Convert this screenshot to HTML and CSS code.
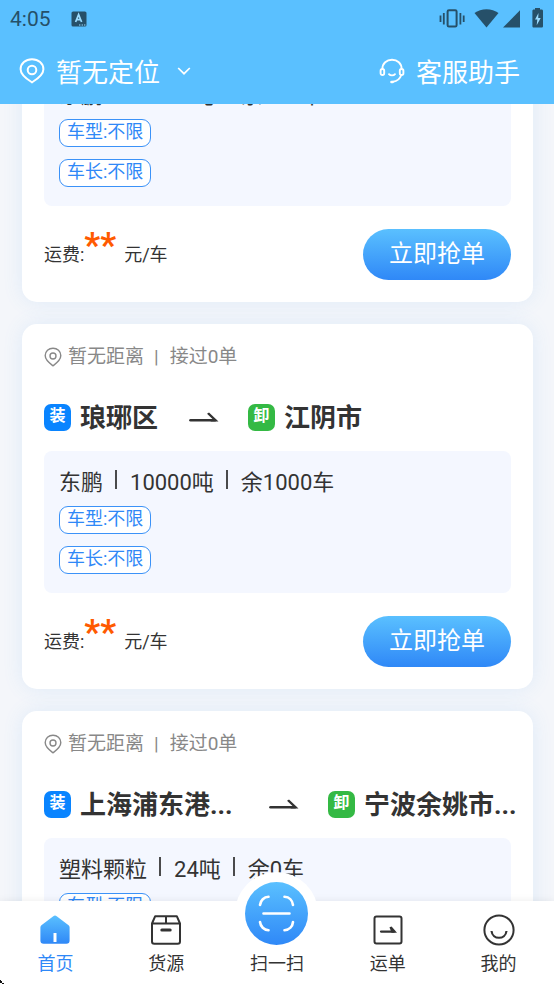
FILE: index.html
```html
<!DOCTYPE html>
<html lang="zh-CN">
<head>
<meta charset="utf-8">
<meta name="viewport" content="width=device-width, initial-scale=1">
<title>首页</title>
<link rel="stylesheet" href="styles.css">
</head>
<body>
<svg class="defs" width="0" height="0" aria-hidden="true">
  <defs>
    <linearGradient id="blue" x1="0" y1="0" x2="0" y2="1">
      <stop offset="0" stop-color="#5ac0ff"/>
      <stop offset="1" stop-color="#2f88f7"/>
    </linearGradient>
    <symbol id="pin" viewBox="0 0 26 26">
      <path d="M13 24.3C10.8 22.9 1.6 17.6 1.6 11.2C1.6 5.2 6.6 1.2 13 1.2S24.4 5.2 24.4 11.2C24.4 17.6 15.2 22.9 13 24.3Z"/>
      <circle cx="13" cy="12" r="4.3"/>
    </symbol>
    <symbol id="pin-tall" viewBox="0 0 18 20">
      <path d="M9 18.800C7.300 17.500 1.200 13.600 1.200 8.600C1.200 4.200 4.700 1.200 9 1.200S16.800 4.200 16.800 8.600C16.800 13.600 10.700 17.500 9 18.800Z"/>
      <circle cx="9" cy="9" r="3"/>
    </symbol>
    <symbol id="arrow" viewBox="0 0 30 12">
      <path d="M1.500 9.200H26" fill="none" stroke="#333" stroke-width="2.600" stroke-linecap="round"/>
      <path d="M18 2.800L20 1.400L29.500 10.500H21.500L23.500 8Z" fill="#333"/>
    </symbol>
  </defs>
</svg>
<div class="app">
  <header class="top">
    <div class="status">
      <span class="status__time">4:05</span>
      <svg class="status__app" width="16" height="16" viewBox="0 0 16 16"><rect x=".5" y=".5" width="15" height="15" rx="1.6" fill="#265069"/><path d="M4.600 11L7.600 3.600L10.600 11M5.600 8.700H9.600" fill="none" stroke="#9bdcff" stroke-width="1.700"/><path d="M8 14H9.400M10.600 14H12M13 14H14.400" stroke="#9bdcff" stroke-width="1.200"/></svg>
      <svg class="status__right" width="106" height="22" viewBox="0 0 106 22" fill="#265069">
        <rect x="9.600" y="2.200" width="9" height="16.400" rx="1.400" fill="none" stroke="#265069" stroke-width="2"/>
        <path d="M2.500 7.500V14M5.800 5V16.500M22.400 5V16.500M25.700 7.500V14" stroke="#265069" stroke-width="1.800" fill="none"/>
        <path d="M36.500 5C43 -.1 54 -.1 60.500 5L48.500 19.500Z"/>
        <path d="M82 2.300V19.500H65Z"/>
        <path d="M97 0H102V1.600H103.600C104.400 1.600 105 2.200 105 3V18.200C105 19 104.400 19.600 103.600 19.600H95.800C95 19.600 94.400 19 94.400 18.200V3C94.400 2.200 95 1.600 95.800 1.600H97Z"/>
        <path d="M100.500 5L97 11.500H99.300L98.700 17.300L102.700 10H100.200Z" fill="#9bdcff"/>
      </svg>
    </div>
    <div class="bar">
      <button class="bar__btn" type="button">
        <svg class="pin-lg" width="26" height="26"><use href="#pin"/></svg>
        <span class="bar__label">暂无定位</span>
        <svg class="chev" width="14" height="9" viewBox="0 0 14 9"><path d="M1.200 1L7 6.700L12.800 1" fill="none" stroke="#fff" stroke-width="1.700"/></svg>
      </button>
      <button class="bar__btn" type="button">
        <svg width="26" height="26" viewBox="0 0 26 26" fill="none" stroke="#fff" stroke-width="1.900" stroke-linecap="round"><path d="M3.400 10.800C3.400 5.300 7.600 1.800 13 1.800S22.600 5.300 22.600 10.800"/><rect x="1.600" y="11" width="3.600" height="6" rx="1.800"/><rect x="20.800" y="11" width="3.600" height="6" rx="1.800"/><path d="M22.300 17C21 20.800 18 23.200 14 23.800"/><path d="M12.500 24H13.500" stroke-width="2.600"/><path d="M10 16.200C11.400 17.800 14.600 17.800 16 16.200"/></svg>
        <span class="bar__label">客服助手</span>
      </button>
    </div>
  </header>

  <main class="viewport">
    <div class="feed">
      <article class="card">
        <section class="cargo">
          <p class="cargo__line"><span>东鹏</span><i class="rule"></i><span>10000吨</span><i class="rule"></i><span>余999车</span></p>
          <span class="chip">车型:不限</span>
          <span class="chip">车长:不限</span>
        </section>
        <footer class="deal"><p class="fee">运费:<b>**</b><span class="fee__unit">元/车</span></p><button class="grab" type="button">立即抢单</button></footer>
      </article>

      <article class="card">
        <div class="meta"><svg class="pin-sm" width="18" height="20"><use href="#pin-tall"/></svg><span>暂无距离</span><span class="meta__sep">|</span><span>接过0单</span></div>
        <div class="route"><span class="mark mark--load">装</span><strong class="route__name">琅琊区</strong><svg class="route__arrow" width="30" height="12"><use href="#arrow"/></svg><span class="mark mark--drop">卸</span><strong class="route__name">江阴市</strong></div>
        <section class="cargo">
          <p class="cargo__line"><span>东鹏</span><i class="rule"></i><span>10000吨</span><i class="rule"></i><span>余1000车</span></p>
          <span class="chip">车型:不限</span>
          <span class="chip">车长:不限</span>
        </section>
        <footer class="deal"><p class="fee">运费:<b>**</b><span class="fee__unit">元/车</span></p><button class="grab" type="button">立即抢单</button></footer>
      </article>

      <article class="card">
        <div class="meta"><svg class="pin-sm" width="18" height="20"><use href="#pin-tall"/></svg><span>暂无距离</span><span class="meta__sep">|</span><span>接过0单</span></div>
        <div class="route"><span class="mark mark--load">装</span><strong class="route__name route__name--cut">上海浦东港...</strong><svg class="route__arrow" width="30" height="12"><use href="#arrow"/></svg><span class="mark mark--drop">卸</span><strong class="route__name">宁波余姚市...</strong></div>
        <section class="cargo">
          <p class="cargo__line"><span>塑料颗粒</span><i class="rule"></i><span>24吨</span><i class="rule"></i><span>余0车</span></p>
          <span class="chip">车型:不限</span>
        </section>
      </article>
    </div>
  </main>

  <nav class="tabs">
    <a class="tab tab--on" href="#home">
      <svg width="32" height="32" viewBox="0 0 32 32"><path d="M14.300 2.200Q16 .8 17.700 2.200L29.600 11.200Q30.600 12 30.600 13.300V26.500Q30.600 29.800 27.300 29.800H4.700Q1.400 29.800 1.400 26.500V13.300Q1.400 12 2.400 11.200Z" fill="url(#blue)"/><path d="M16 19V28" stroke="#fff" stroke-width="3"/></svg>
      <span>首页</span>
    </a>
    <a class="tab" href="#goods">
      <svg width="32" height="32" viewBox="0 0 32 32" fill="none" stroke="#333" stroke-width="2" stroke-linejoin="round"><path d="M2 9.500L5.200 2.200H26.800L30 9.500V27.500Q30 29.800 27.700 29.800H4.300Q2 29.800 2 27.500ZM2 9.500H30M16 2.200V9.500"/><path d="M11.800 16H20.200" stroke-width="3" stroke-linecap="round"/></svg>
      <span>货源</span>
    </a>
    <a class="tab tab--scan" href="#scan">
      <span class="scan"><svg width="63" height="63" viewBox="0 0 63 63" fill="none" stroke="#fff" stroke-width="2.600" stroke-linecap="round"><circle cx="31.500" cy="31.500" r="31.500" fill="url(#blue)" stroke="none"/><path d="M18.500 31.500H44.500M15 23C15.500 18.500 19 15 23.500 14.800M39.500 14.800C44.500 15 47.500 18.500 48 23M48 40C47.500 44.500 44.500 48 39.500 48.200M23.500 48.200C19 48 15.500 44.500 15 40"/></svg></span>
      <span>扫一扫</span>
    </a>
    <a class="tab" href="#orders">
      <svg width="32" height="32" viewBox="0 0 32 32" fill="none" stroke="#333" stroke-width="2"><rect x="2.500" y="2.500" width="27" height="27" rx="2"/><path d="M9 17.600H22" stroke-width="2.200" stroke-linecap="round"/><path d="M17.500 13.200L19.600 12.600L25 18.700H19.500Z" fill="#333" stroke="none"/></svg>
      <span>运单</span>
    </a>
    <a class="tab" href="#me">
      <svg width="32" height="32" viewBox="0 0 32 32" fill="none" stroke="#333" stroke-width="2"><circle cx="16" cy="16" r="14.600"/><path d="M8.500 17C9.500 26 22.500 26 23.500 17" stroke-width="2.200"/></svg>
      <span>我的</span>
    </a>
    <svg class="corner" width="4" height="4" viewBox="0 0 4 4"><path d="M0 0H1V1H2V3H4V4H2V3H0Z" fill="#111"/></svg>
  </nav>
</div>
</body>
</html>
```
FILE: styles.css
```css
* { box-sizing: border-box; }

body {
  margin: 0;
  background: #f4f6fa;
  color: #333;
  font-family: Roboto, "Noto Sans CJK SC", sans-serif;
}

p { margin: 0; }
svg { display: block; flex: none; }
button { border: 0; padding: 0; background: none; color: inherit; font: inherit; }
.defs { position: absolute; }

.app {
  display: flex;
  flex-direction: column;
  height: 100vh;
  overflow: hidden;
}

/* header */
.top { flex: none; background: #5ac0ff; color: #fff; }

.status {
  display: flex;
  align-items: center;
  height: 38px;
  padding: 0 10px;
  color: #265069;
}
.status__time { font-size: 21px; line-height: 40px; }
.status__app { margin-left: 20px; }
.status__right { margin-left: auto; }

.bar {
  display: flex;
  align-items: center;
  justify-content: space-between;
  height: 66px;
  padding: 0 34px 0 19px;
}
.bar__btn {
  display: flex;
  align-items: center;
  gap: 11px;
  font-size: 26px;
  line-height: 36px;
}
.bar__label { padding-top: 3px; }
.pin-lg { stroke: #fff; stroke-width: 2px; fill: none; }
.chev { margin-left: 6px; }

/* scrolled list */
.viewport { flex: 1; min-height: 0; overflow: hidden; }
.feed {
  display: flex;
  flex-direction: column;
  gap: 22px;
  margin-top: -79px;
  padding: 0 21px 0 22px;
}

.card {
  padding: 22px;
  border-radius: 15px;
  background: #fff;
  box-shadow: 0 0 20px rgba(70, 160, 240, .12);
}

.meta {
  display: flex;
  align-items: center;
  height: 22px;
  color: #888;
  font-size: 19px;
  line-height: 22px;
}
.pin-sm { margin-right: 6px; stroke: #888; stroke-width: 1.4px; fill: none; }
.meta__sep { margin: 0 11px 0 10px; }

.route {
  display: flex;
  align-items: center;
  height: 34px;
  margin-top: 32px;
  white-space: nowrap;
}
.mark {
  flex: none;
  width: 27px;
  height: 27px;
  border-radius: 7px;
  color: #fff;
  font-size: 16px;
  font-weight: 700;
  line-height: 24px;
  text-align: center;
}
.mark--load { background: #0984ff; }
.mark--drop { background: #34b944; }
.route__name { margin-left: 9px; padding-top: 2px; font-size: 26px; line-height: 34px; }
.route__name--cut { min-width: 158px; }
.route__arrow { margin: 0 29px 0 31px; }

.cargo {
  display: flex;
  flex-direction: column;
  align-items: flex-start;
  gap: 12px;
  margin-top: 17px;
  padding: 15px 15px 19px;
  border-radius: 8px;
  background: #f4f7ff;
}
.cargo__line {
  display: flex;
  height: 28px;
  font-size: 22px;
  line-height: 34px;
}
.rule { width: 2px; height: 19px; margin: 4px 13px 0 12px; background: #4a4a4c; }

.chip {
  height: 28px;
  padding: 0 7px;
  border: 1px solid #3b92f8;
  border-radius: 9px;
  background: #fff;
  color: #2f88f7;
  font-size: 18px;
  line-height: 24px;
}

.deal {
  display: flex;
  align-items: center;
  justify-content: space-between;
  height: 51px;
  margin-top: 23px;
}
.fee { padding-bottom: 2px; font-size: 18px; line-height: 51px; }
.fee b { color: #ff5a00; font-size: 35px; line-height: 1; vertical-align: 4px; }
.fee__unit { margin-left: 8px; }
.grab {
  width: 148px;
  height: 51px;
  border-radius: 26px;
  background: linear-gradient(#5ac0ff, #2f88f7);
  color: #fff;
  font-size: 24px;
  line-height: 51px;
}

/* tab bar */
.tabs {
  position: relative;
  display: grid;
  grid-template-columns: repeat(5, 1fr);
  grid-template-rows: 83px;
  flex: none;
  background: #fff;
  box-shadow: 0 0 8px rgba(0, 0, 0, .08);
}
.tab {
  display: flex;
  flex-direction: column;
  align-items: center;
  justify-content: flex-end;
  gap: 4px;
  padding-bottom: 7px;
  color: #333;
  font-size: 18px;
  line-height: 27px;
  text-decoration: none;
}
.tab--on { color: #2f88f7; }
.tab--scan { gap: 0; }
.scan {
  margin-bottom: -5px;
  padding: 10px;
  border-radius: 50%;
  background: #fff;
}
.corner { position: absolute; left: 0; bottom: 0; }
```
